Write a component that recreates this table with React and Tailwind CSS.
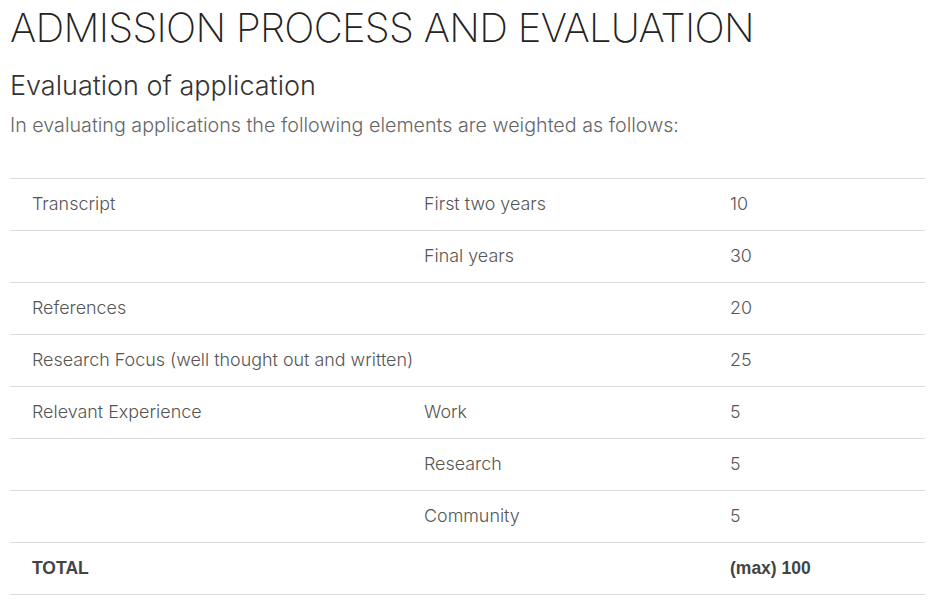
import React from "react"

const rows = [
  ["Transcript", "First two years", "10"],
  ["", "Final years", "30"],
  ["References", "", "20"],
  ["Research Focus (well thought out and written)", "", "25"],
  ["Relevant Experience", "Work", "5"],
  ["", "Research", "5"],
  ["", "Community", "5"],
]

const App = () => {
  return (
    <div className="bg-white min-h-screen pl-[10px] pr-[12px] pt-[5px] font-['Inter',sans-serif]">
      <h1 className="text-[40px] leading-[46px] font-extralight text-[#222] tracking-[-0.7px]">
        ADMISSION PROCESS AND EVALUATION
      </h1>
      <h2 className="mt-[18px] text-[27px] leading-[34px] font-light text-[#333]">
        Evaluation of application
      </h2>
      <p className="mt-[9px] text-[19.7px] leading-[26px] text-[#666] font-light">
        In evaluating applications the following elements are weighted as follows:
      </p>
      <table className="mt-[40px] w-full table-fixed border-collapse text-[17.9px] text-[#555] font-light">
        <colgroup>
          <col className="w-[392px]" />
          <col className="w-[306px]" />
          <col />
        </colgroup>
        <tbody>
          {rows.map((r, i) => (
            <tr key={i} className="border-t border-[#dcdcdc] h-[52px]">
              <td className="pl-[22px] whitespace-nowrap">{r[0]}</td>
              <td className="pl-[22px] whitespace-nowrap">{r[1]}</td>
              <td className="pl-[22px]">{r[2]}</td>
            </tr>
          ))}
          <tr className="border-t border-b border-[#dcdcdc] h-[52px] font-['Liberation_Sans',sans-serif] font-bold text-[17.5px] text-[#444]">
            <td className="pl-[22px]">TOTAL</td>
            <td></td>
            <td className="pl-[22px]">(max) 100</td>
          </tr>
        </tbody>
      </table>
    </div>
  )
}

export default App
